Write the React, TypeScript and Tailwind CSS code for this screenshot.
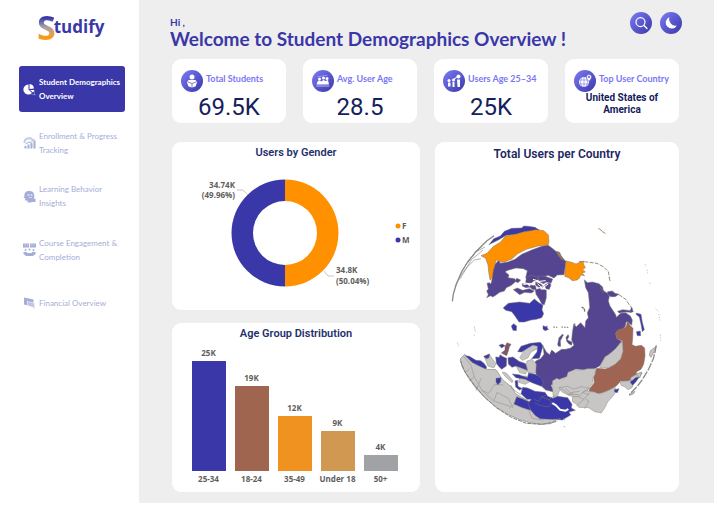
import type { ReactNode } from "react";

const navItems = [
  { label: "Student Demographics Overview", icon: "pie" },
  { label: "Enrollment & Progress Tracking", icon: "progress" },
  { label: "Learning Behavior Insights", icon: "head" },
  { label: "Course Engagement & Completion", icon: "class" },
  { label: "Financial Overview", icon: "money" },
];

const ages = [
  { label: "25-34", value: "25K", height: 110, color: "bg-[#3a37a9]" },
  { label: "18-24", value: "19K", height: 85, color: "bg-[#a0654f]" },
  { label: "35-49", value: "12K", height: 55, color: "bg-[#f09220]" },
  { label: "Under 18", value: "9K", height: 40, color: "bg-[#d09850]" },
  { label: "50+", value: "4K", height: 16, color: "bg-[#a1a2a6]" },
];

function NavIcon({ name }: { name: string }) {
  return (
    <svg viewBox="0 0 26 26" className="size-[13px] shrink-0" fill="currentColor" aria-hidden="true">
      {name === "pie" && (
        <>
          <path d="M11 3A10 10 0 1 0 18 20L11 13Z" />
          <path d="M13 2A10 10 0 0 1 22 11L13 12Z" />
          <path d="M14 14H23A10 10 0 0 1 20 19Z" />
          <path d="M17 23h8v1h-8zM23 17h1v8h-1z" opacity=".6" />
        </>
      )}
      {name === "progress" && (
        <>
          <path d="M1 14A11 11 0 0 1 21 7L18 10A7 7 0 0 0 5 14Z" opacity=".6" />
          <path d="M3 20h4v5H3zM9 17h4v8H9zM15 14h4v11h-4zM21 9h4v16h-4z" />
          <path d="M5 16l7-4 4 1 7-7" stroke="currentColor" strokeWidth="2" fill="none" />
        </>
      )}
      {name === "head" && (
        <>
          <path d="M13 2C6 1 2 6 3 12L1 16h3v5h5v4h8v-4c5-3 7-8 5-13-1-4-4-6-9-6Z" />
          <path d="M9 8h4v4H9zM15 8h4v4h-4zM12 14h6v2h-6z" fill="white" opacity=".5" />
          <rect x="16" y="17" width="9" height="7" rx="1" />
        </>
      )}
      {name === "class" && (
        <>
          <path d="M0 1h12v8H0zM14 1h12v8H14z" />
          <path d="M3 3h3v2H3zM8 3h2v2H8zM16 3h3v2h-3zM21 3h2v2h-2z" fill="white" opacity=".6" />
          <circle cx="5" cy="14" r="2" /><circle cx="13" cy="13" r="2" /><circle cx="21" cy="14" r="2" />
          <path d="M1 18h6l2 2h8l2-2h6v4l-5 4H6l-5-4Z" />
        </>
      )}
      {name === "money" && (
        <>
          <path d="M2 1L21 5V20L2 15Z" />
          <path d="M8 8L23 11V24L8 18Z" fill="white" opacity=".6" />
          <path d="M10 10l13 3v11l-4-4-9-3Z" opacity=".5" />
        </>
      )}
    </svg>
  );
}

function Badge({ children }: { children: ReactNode }) {
  return (
    <span className="flex size-[22px] shrink-0 items-center justify-center rounded-full bg-linear-to-br from-[#7f7bf5] to-[#3a37a9] text-white">
      <svg viewBox="0 0 28 28" className="size-[14px]" fill="currentColor" aria-hidden="true">
        {children}
      </svg>
    </span>
  );
}

function Stat({ label, icon, children }: { label: string; icon: ReactNode; children: ReactNode }) {
  return (
    <section className="flex h-16 flex-col rounded-[9px] bg-white pt-[11px]">
      <div className="flex items-center gap-[3px] pl-[9px]">
        <Badge>{icon}</Badge>
        <h2 className="flex-1 pb-1 font-['Lato',sans-serif] text-[9px] leading-4 font-bold whitespace-nowrap text-[#7a76f5]">
          {label}
        </h2>
      </div>
      {children}
    </section>
  );
}

function Figure({ children }: { children: ReactNode }) {
  return (
    <p className="text-center font-['Roboto',sans-serif] text-[24px] leading-[30px] text-[#14215c]">{children}</p>
  );
}

function CardTitle({ children, large = false }: { children: ReactNode; large?: boolean }) {
  return (
    <h2
      className={
        large
          ? "text-center font-['Roboto',sans-serif] text-[12px] leading-4 font-semibold text-[#1c2763]"
          : "text-center font-['Roboto',sans-serif] text-[11px] leading-4 font-semibold text-[#25306d]"
      }
    >
      {children}
    </h2>
  );
}

function Donut() {
  return (
    <svg viewBox="0 0 248 149" className="w-full font-['Open_Sans',sans-serif] text-[8px] font-bold" role="img" aria-label="Users by gender">
      <path d="M113 18.5A53.5 53.5 0 0 1 113 125.5V104A32 32 0 0 0 113 40Z" fill="#ff9100" />
      <path d="M113 18.5A53.5 53.5 0 0 0 113 125.5V104A32 32 0 0 1 113 40Z" fill="#3a37a9" />
      <path d="M65 29h6l5 5M152 110l4 5h6" fill="none" stroke="#c8c8c8" />
      <g fill="#605e5c">
        <text x="63" y="27" textAnchor="end">34.74K</text>
        <text x="63" y="37" textAnchor="end">(49.96%)</text>
        <text x="164" y="112">34.8K</text>
        <text x="164" y="123">(50.04%)</text>
        <text x="230" y="68">F</text>
        <text x="230" y="82">M</text>
      </g>
      <circle cx="226" cy="65" r="2.5" fill="#ff9100" />
      <circle cx="226" cy="79" r="2.5" fill="#3a37a9" />
    </svg>
  );
}

function Globe() {
  return (
    <svg viewBox="60 255 651 624" className="mx-auto mt-[59px] w-[217px] max-w-full" role="img" aria-label="Globe of users per country" strokeLinejoin="round">
      {/* South America and the Caribbean along the rim */}
      <g fill="none" stroke="#8a8a88" strokeWidth="2">
        <path d="M70 496l3-22 9-30 16-37 18-29 25-31 32-32 22-16" strokeWidth="4" />
        <path d="M80 450l14-30 22-30 12-20 18-14 16-14M92 430l22-36 22-22 20-4M110 386l30-38 28-15M132 360l8-14 20-16" />
        <path d="M508 277l8 5 4 5 9 5" stroke="#a98a70" strokeWidth="3" />
        <path d="M648 385l4 8M654 402l2 10M662 440l3 7M680 518l8 8M694 596l1 18M689 535l4 18" strokeDasharray="3 5" />
        <path d="M85 620l4 12M136 572l3 16M135 596l2 6" strokeDasharray="3 3" />
      </g>

      {/* North America */}
      <g stroke="#77756f" strokeWidth="1.5">
        <path fill="#3f39a4" d="M180 326l14-18 20-8 12-14 22-9 30-1 6-6 14 1 20 3 14 9-20 3-26 1-24 8-30 3-24 14-20 10Z" />
        <path fill="#ff9100" d="M230 300l25-4 30-8 35-7 25 3 13 13 2 20-3 10-30 3-35 10-27 14-17 15-20 8-20 2-6-9-5 20-4 34-10 8-4-25-2-20-7-20-14-8 18-7 20-21 20-12Z" />
        <path fill="#554590" d="M208 374l6 8 22-4 22-8 20-15 30-13 30-11 20-3 17 13 22 19 9 12 5 4-6 40-20 1-10 9-18-8-20 7-18 6-20 2-9-8 5-21-12-6-22-2-28 8-4 4 11 9-3 8 20 3 4 8-14 12-15 7-6 10-14 4-12 9-9 5-6-4-12 6 5-9-5-11 5-6-4-17 7-2 5 4 4-18 3-22 6-20Z" />
        <path fill="#9a7753" d="M383 346l9 3 6 14 7 9-7-1-11-13Z" />
        <path fill="#ff9100" d="M411 375l14 3 16 6 15-7 9-2-2 8 6 12-8 5 8 8-10 3 8 8-12-2-4 10-7 5-14 2-11-9-12-4Z" />
      </g>
      <g fill="#554590" stroke="#77756f" strokeWidth="1.5">
        <path d="M253 461l12-5 16 7 20-5 15 7-9 6-20-2-15 7-10-8Z" />
        <path d="M292 426l13-8 20 5 3 10-14 2-10 9-14-5ZM327 420l22 1 22 8-5 13-13-4-10 5-14-8Z" />
        <path d="M263 427l12 5-8 8-9-4ZM280 443l14 2 9 8-12 2-11-5ZM305 447l14 2 4 13-13-2-8-7Z" />
        <path d="M319 461l10-6 8 6 15 0 0 24-6 21-7-1-9-17-9-13ZM347 447l13-7 6 6-5 14-10-1ZM320 438l15 6 10 10-11 2-14-8Z" />
      </g>
      <path d="M283 446l18-4 14 3M312 430l20 6 18-2M325 443l15 13 18-12M322 459l18-7 17 12" fill="none" stroke="white" strokeWidth="3" />

      {/* Greenland, Iceland and Svalbard */}
      <g fill="#3a37a9" stroke="#77756f" strokeWidth="1.5">
        <path d="M223 515l15-13 34-4 30 4 14-13 12 10 14 9-3 13 5 12-6 12-16 5-16 2-20 6-16 0-12-18-10-13-18-4-7-7Z" />
        <path d="M247 570l7-7 9 7-1 14-10-1-3-7ZM342 569l8 3 5-2-1 6 5 4-10 4-7-4Z" />
        <path d="M373 573l12 1M397 573l21 1" strokeWidth="3" strokeDasharray="5 3" />
      </g>

      {/* Russia */}
      <path
        fill="#554590"
        stroke="#77756f"
        strokeWidth="1.5"
        d="M466 431L475 440 490 438 510 443 521 453 523 464 538 473 541 482 538 495 543 510 560 536 562 544 575 532 590 530 604 540 610 552 608 568 600 560 592 557 588 572 580 580 566 584 560 592 564 608 578 616 560 638 540 655 528 663 512 690 495 699 470 702 440 699 428 707 412 722 395 728 378 738 366 748 375 768 350 762 335 748 342 738 322 716 315 690 320 675 335 668 345 655 342 630 352 648 362 656 368 642 380 652 398 640 410 640 425 636 435 628 428 612 430 590 434 565 442 572 455 560 468 575 470 555 478 545 475 530 482 515 480 490 478 470 470 455Z"
      />
      <g fill="#554590" stroke="#77756f" strokeWidth="1.5">
        <path d="M536 467l14-2 8 7 12 3-12 7-13 0-10-8ZM514 453l12 14-5 3Z" />
        <path d="M386 625l4-20 11-11 2 4-9 16 1 17-7 0ZM411 604l6-8 3 4-5 12 14 6-1 10-8-4-7-8Z" />
        <path d="M458 513l6 4M466 518l1 9M436 563l2 4" strokeWidth="4" />
      </g>

      {/* Japan and the Pacific rim */}
      <path d="M450 376l24 2 30 4 20 11 14 14 4 20M570 476l20 14 12 18 10 12M540 424l4 13" fill="none" stroke="#9a8c78" strokeWidth="3" strokeDasharray="12 4" />
      <g fill="#3a37a9" stroke="#77756f" strokeWidth="1.5">
        <path d="M607 514l6 13-10 2ZM622 531l14 4 4 24 6 22-6 6-4-22-5-22-10-8ZM622 587l12-2 1 14-10 0Z" />
        <path d="M566 526l15-5 25 3 2 5-18-1-20 3Z" fill="#554590" />
      </g>

      {/* China */}
      <path
        fill="#a06453"
        stroke="#77756f"
        strokeWidth="1.5"
        d="M597 555L604 569 612 577 611 607 609 626 620 631 637 628 647 636 648 660 644 685 636 700 622 708 622 720 606 730 600 735 575 735 562 750 540 762 520 770 506 774 498 768 480 766 482 758 496 740 494 722 503 697 529 699 539 695 558 685 575 668 582 645 580 614 564 608 560 592 566 582 582 577 590 574Z"
      />
      <path fill="#c8c6c4" stroke="#8a8a88" strokeWidth="1.5" d="M579 616L582 645 575 668 558 685 539 695 512 695 528 663 545 653 560 638Z" />

      {/* Central and south Asia */}
      <g fill="#c8c6c4" stroke="#8a8a88" strokeWidth="1.5">
        <path d="M370 735l13-8 10 4 20-8 4-14 20-8 18 3 20-6 25 0-2 18-6 8 0 15-12 17-17 5-20 6-15-4-20-4-16 4-6 16 11 13-22-2-3-15Z" />
        <path d="M390 755l25-4 18 8 25-7 23 5-16 18-20 8-24-4-22-11Z" />
        <path d="M430 782l20 0 17-18 13 2 18 4 20 4 20-10 20-10 4 10-8 14-18 20-9 18-10 15-20-4-18-12-30-1-6-9-12-7Z" />
        <path d="M450 783l15 7-23 20M482 770l-15 17 13 9-14 22M408 757l15 13 29-4M415 776l18-5M480 757l-20 13 20 6M394 755l26 20 29 1" fill="none" />
        <path d="M571 738l30-4 4-4 8 13-4 12-12 6-10-9-9-3ZM604 726l14-9 22-6-11 16-20 15Z" />
      </g>
      <path fill="#3a37a9" stroke="#77756f" strokeWidth="1.5" d="M603 738l9-6 7-7 11-2-8 13-11 12ZM556 761l14-3-5 12-8-2Z" />
      <path d="M682 628l-4 20-5 20-14 31-19 32-15 20-16 16-8 10" fill="none" stroke="#8a8a88" strokeWidth="4" strokeDasharray="24 4" />
      <path d="M664 644l16-12-3 12-11 20-5-6ZM602 775l16-9-5 8-12 4ZM622 714l16-6-6 18Z" fill="#c8c6c4" stroke="#77756f" strokeWidth="1.5" />

      {/* Africa */}
      <path fill="#c8c6c4" stroke="#8a8a88" strokeWidth="2" d="M94 668l13-13 25 22 15 8 29 15 25 1 20 30 31 26 6 15 20 12 25 13 18 22 27 2 8 21 26 12-17 9-30 2-33-5-30-9-34-15-38-24-30-25-30-31-24-34-17-30Z" />
      <g fill="none" stroke="#9a9a98" strokeWidth="2">
        <path d="M104 661l22 27 10 35 23 40 35 32 49 16M156 727l-15 37M159 763l20 9 18-27 26 2M195 794l9-25 34 18 14 30M240 817l32-25 28 8M272 794l9 19 33 10M300 825l9 22 30 5M340 852l18-11M120 700l-12 10M136 722l-16 12" />
        <path d="M94 674l14 34 26 36 31 38 38 34 44 28 45 18 48 3 45-9" stroke="#7f7f7c" strokeWidth="3" strokeDasharray="12 3" />
      </g>
      <g fill="#3a37a9" stroke="#77756f" strokeWidth="1.5">
        <path d="M109 659l12 2 20 12 14 1 10 8 8 11-3 6-21-10-20-10-12-12ZM263 782l20 8 18 8 3 25-27-9-22-10Z" />
        <path d="M201 727l15-2-1 13-9 8-5-8Z" />
      </g>

      {/* Europe */}
      <g fill="#c8c6c4" stroke="#8a8a88" strokeWidth="1.5">
        <path d="M166 662l14-8 21 30-7 12-17-6ZM272 665l14-22 21-16 19-1-1 12-19 10-10 18-16 7ZM294 675l15-5 13 14-2 27-22 0-8-17Z" />
        <path d="M260 688l20-7 15 13-5 20-18-4ZM272 722l20-2 12 16-15 9-20-6Z" />
        <path d="M220 708l12 3 20 23-3 6-22-20Z" />
      </g>
      <g fill="#433a9e" stroke="#77756f" strokeWidth="1.5">
        <path d="M202 682l-2-19 11 1 2-8 9 6 11 5-1 23-14 10-8-8ZM237 665l15-2 18 13 20 7 5 20-34-13-12 4-11-10ZM210 628l10-4 8 5-10 7ZM164 661l18-7-2 11-8 3Z" />
        <path fill="#3a37a9" d="M266 647l10-16 28-9 30-3 8 10-5 18-6 20-23 1 16-20 2-17-14-4-14 8-20 13ZM250 714l20 2 25 9 4-14 20 4 18 10 6 16-6 10-28-11-20-10-28-5ZM258 735l8-2 1 18 13 7-9 4-11-9Z" />
      </g>
      <path fill="#825469" stroke="#77756f" strokeWidth="1.5" d="M234 620l12 5-5 8-3 12-5 14-16-8 11-9 0-11Z" />

      {/* Middle East */}
      <g fill="#3a37a9" stroke="#77756f" strokeWidth="1.5">
        <path d="M281 754l15 2 22 10 30 3 8 12 16 6 14-6 30 4 13 20-2 11 12 7-19 5 5 9-25 15-23-2-15 0-29-2-15-10-13-16-8-20 10-12-13 0-12-11-6-6Z" />
        <path d="M315 789l14 8 8-14 14-5M337 783l23 8 8 9-10 13-26-5-15-8M359 791l21-14M363 801l11 7" fill="none" />
      </g>
      <path d="M370 801l11 7 12 13 17 3 8-5" fill="none" stroke="white" strokeWidth="6" />
      <path d="M404 845l2 8M386 848l9 1M405 870l2 4M245 747l5 12 25 17" fill="none" stroke="#8a8a88" strokeWidth="2" />
    </svg>
  );
}

const peopleIcon = (
  <>
    <circle cx="7" cy="10" r="3" /><circle cx="15" cy="8" r="3" /><circle cx="22" cy="9" r="3" />
    <path d="M3 15q4-4 7 0l5-3 4 2 5-2 2 9H1Z" />
    <path d="M1 23h26v2H1zM3 5l20-3v1L3 6Z" opacity=".6" />
  </>
);

export default function App() {
  return (
    <div className="flex min-h-screen bg-white font-['Lato',sans-serif]">
      <aside className="w-[139px] shrink-0 pt-3">
        <div className="flex h-[30px] items-start pl-[37px] font-['Open_Sans',sans-serif] font-bold">
          <span className="bg-linear-to-b from-[#3a37a9] from-20% via-[#a5a0a8] via-50% to-[#f59a1c] to-80% bg-clip-text text-[34px] leading-[30px] text-transparent">S</span>
          <span className="-ml-[2px] text-[17px] leading-[30px] text-[#3a37a9]">tudify</span>
        </div>
        <nav className="mt-6 mr-[14px] ml-[19px] flex h-[260px] flex-col justify-between" aria-label="Reports">
          {navItems.map((item, index) => (
            <a
              key={item.label}
              href="#"
              aria-current={index === 0 ? "page" : undefined}
              className={
                index === 0
                  ? "flex h-[46px] items-center gap-[3px] rounded-[3px] bg-[#3a37a9] pl-1 text-[8px] leading-[14px] font-bold text-white"
                  : "flex h-[46px] items-center gap-[3px] pl-1 text-[8px] leading-[14px] text-[#a5aed6]"
              }
            >
              <NavIcon name={item.icon} />
              <span className="flex-1">{item.label}</span>
            </a>
          ))}
        </nav>
      </aside>

      <main className="mr-1 mb-[2px] flex-1 bg-[#eeeeee] pt-3 pr-[35px] pl-[33px]">
        <header className="-ml-[2px] flex h-[47px] justify-between text-[#3a37a9]">
          <h1 className="pt-1 font-bold">
            <span className="block text-[10px] leading-[13px]">Hi ,</span>
            <span className="block text-[19px] leading-5 whitespace-nowrap">Welcome to Student Demographics Overview !</span>
          </h1>
          <div className="-mr-[3px] flex h-[22px] gap-2">
            <button type="button" aria-label="Search">
              <Badge>
                <g fill="none" stroke="currentColor" strokeWidth="2.5" strokeLinecap="round">
                  <circle cx="13" cy="12" r="9" /><path d="M20 19l6 6" />
                </g>
              </Badge>
            </button>
            <button type="button" aria-label="Dark mode">
              <Badge><path d="M11 2A12 12 0 1 0 26 19A13 13 0 0 1 11 2Z" /></Badge>
            </button>
          </div>
        </header>

        <div className="grid grid-cols-4 gap-[17px]">
          <Stat label="Total Students" icon={<><circle cx="14" cy="6" r="5" /><path d="M7 12h14l3 5-3 8-7 2-7-2-3-8Z" /><path d="M6 16l8 3 8-3M14 19v7" fill="none" stroke="#5753c5" strokeWidth="1.5" /></>}>
            <Figure>69.5K</Figure>
          </Stat>
          <Stat label="Avg. User Age" icon={peopleIcon}><Figure>28.5</Figure></Stat>
          <Stat label="Users Age 25–34" icon={<><circle cx="4" cy="13" r="3" /><circle cx="13" cy="12" r="3" /><circle cx="23" cy="5" r="4" /><path d="M2 17h5v8H2zM11 16h4v10h-4zM20 11h6v15h-5ZM13 10l7-5v2l-6 5Z" /></>}>
            <Figure>25K</Figure>
          </Stat>
          <Stat label="Top User Country" icon={<><circle cx="12" cy="16" r="10" /><path d="M3 12h18M3 20h18M12 6v20M7 7q-4 9 0 18M17 7q4 9 0 18" fill="none" stroke="#6562d5" /><path d="M22 1a5 5 0 0 1 5 5q0 4-5 9-5-5-5-9a5 5 0 0 1 5-5Z" stroke="#5753c5" /><circle cx="22" cy="6" r="2" fill="#5753c5" /></>}>
            <p className="px-2 text-center font-['Roboto',sans-serif] text-[10px] leading-3 font-bold text-[#14215c]">United States of America</p>
          </Stat>
        </div>

        <div className="mt-[19px] grid grid-cols-[248fr_244fr] gap-[15px]">
          <div className="flex flex-col gap-[13px]">
            <section className="h-[168px] rounded-[9px] bg-white pt-[3px]">
              <CardTitle>Users by Gender</CardTitle>
              <Donut />
            </section>
            <section className="flex h-[169px] flex-col rounded-[9px] bg-white pt-[3px]">
              <CardTitle>Age Group Distribution</CardTitle>
              <div className="flex flex-1 items-end pb-[7px] pl-[15px] font-['Open_Sans',sans-serif] text-[8px] leading-3 font-bold text-[#605e5c]">
                {ages.map((age) => (
                  <div key={age.label} className="flex w-[43px] flex-col items-center whitespace-nowrap">
                    <span className="pb-[2px]">{age.value}</span>
                    <div className={`w-[34px] ${age.color}`} style={{ height: age.height }} />
                    <span className="pt-[2px]">{age.label}</span>
                  </div>
                ))}
              </div>
            </section>
          </div>
          <section className="rounded-[9px] bg-white pt-1">
            <CardTitle large>Total Users per Country</CardTitle>
            <Globe />
          </section>
        </div>
      </main>
    </div>
  );
}
